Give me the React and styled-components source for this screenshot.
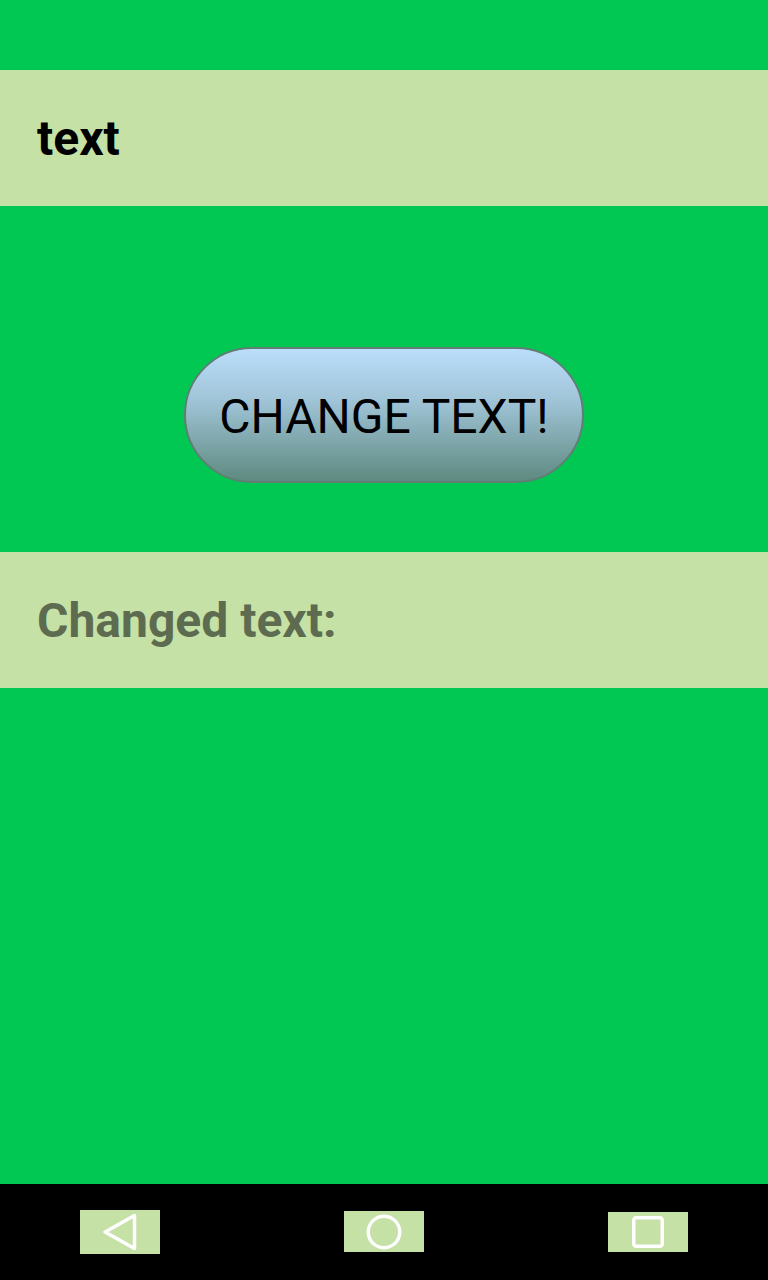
import React from "react";
import styled, { createGlobalStyle } from "styled-components";

const Global = createGlobalStyle`
  html, body { margin: 0; padding: 0; }
  body { font-family: Roboto, "Noto Sans", sans-serif; }
`;

const Screen = styled.div`
  width: 768px;
  height: 1280px;
  display: flex;
  flex-direction: column;
  background: #00c853;
  overflow: hidden;
`;

const Content = styled.main`
  flex: 1;
  display: flex;
  flex-direction: column;
  padding-top: 70px;
`;

const Bar = styled.div`
  height: 136px;
  display: flex;
  align-items: center;
  padding-left: 37px;
  background: #c5e1a5;
  font-size: 48px;
  font-weight: 700;
  color: ${(p) => p.$color || "#000"};
  margin-top: ${(p) => p.$mt || 0}px;
`;

const ButtonRow = styled.div`
  display: flex;
  justify-content: center;
  margin-top: 141px;
`;

const PillButton = styled.button`
  width: 400px;
  height: 136px;
  border-radius: 68px;
  border: 2px solid #5f7f74;
  background: linear-gradient(to bottom, #bbdefb 0%, #9fc3d6 40%, #5e8a80 100%);
  font-family: Roboto, sans-serif;
  font-size: 48px;
  color: #000;
  padding: 2px 0 0;
  cursor: pointer;
`;

const NavBar = styled.nav`
  height: 96px;
  background: #000;
  display: flex;
  justify-content: space-between;
  padding: 0 80px;
`;

const NavKey = styled.div`
  width: 80px;
  height: ${(p) => p.$h}px;
  margin-top: ${(p) => p.$top}px;
  background: #c5e1a5;
  display: flex;
  align-items: center;
  justify-content: center;
`;

export default function App() {
  return (
    <>
      <Global />
      <Screen>
        <Content>
          <Bar>text</Bar>
          <ButtonRow>
            <PillButton>CHANGE TEXT!</PillButton>
          </ButtonRow>
          <Bar $mt={69} $color="#5d6b50">Changed text:</Bar>
        </Content>
        <NavBar>
          <NavKey $h={44} $top={26}>
            <svg width="40" height="40" viewBox="0 0 40 40">
              <path d="M34.5 3.5 L5 20 L34.5 36.5 Z" fill="none" stroke="#fff" strokeWidth="3.5" strokeLinejoin="round" />
            </svg>
          </NavKey>
          <NavKey $h={41} $top={27}>
            <svg width="40" height="40" viewBox="0 0 40 40">
              <circle cx="20" cy="20" r="15.75" fill="none" stroke="#fff" strokeWidth="3.5" />
            </svg>
          </NavKey>
          <NavKey $h={40} $top={28}>
            <svg width="40" height="40" viewBox="0 0 40 40">
              <rect x="5.75" y="5.75" width="28.5" height="28.5" rx="2.5" fill="none" stroke="#fff" strokeWidth="3.5" />
            </svg>
          </NavKey>
        </NavBar>
      </Screen>
    </>
  );
}
